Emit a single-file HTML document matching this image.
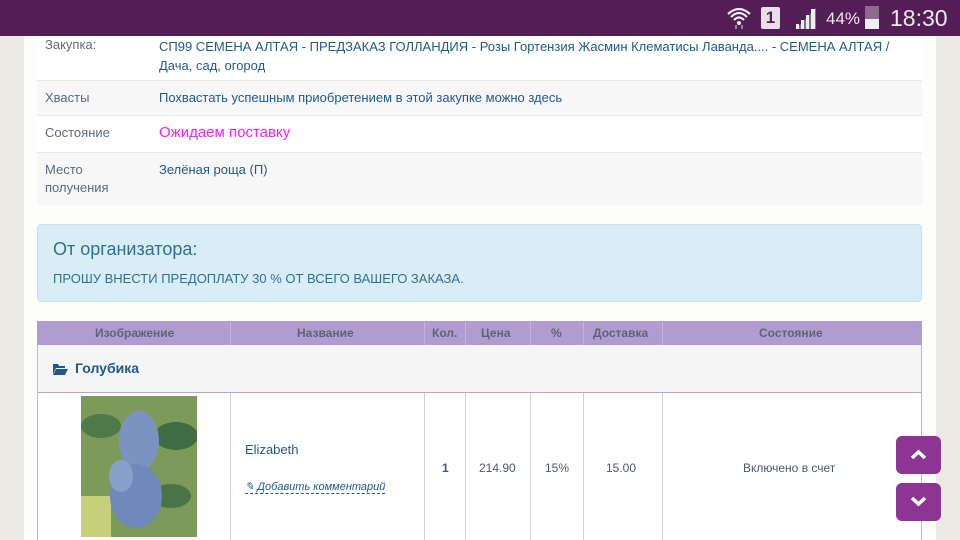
<!DOCTYPE html>
<html><head><meta charset="utf-8"><style>
*{box-sizing:border-box;margin:0;padding:0}
body{width:960px;height:540px;overflow:hidden;position:relative;font-family:"Liberation Sans",sans-serif;background:#ebe9e3}
.sb{position:absolute;left:0;top:0;width:960px;height:36px;background:#531d56;color:#f0e6f0}
.page{position:absolute;left:24px;top:36px;width:912px;height:504px;background:#fdfdfc}
.abs{position:absolute}
.lbl{color:#5a6b7e;font-size:13px}
.val{color:#1f5a8c;font-size:13px}
.row{position:absolute;left:37px;width:885px}
</style></head><body>
<div class="sb">
 <svg class="abs" style="left:726px;top:6px" width="26" height="24" viewBox="0 0 26 24"><path d="M2 8 Q13 -2 24 8 M5 11 Q13 3 21 11 M8 14 Q13 9 18 14" stroke="#eee" stroke-width="2.2" fill="none"/><circle cx="13" cy="17" r="2" fill="#eee"/><path d="M10 19v4M16 19v4" stroke="#aaa" stroke-width="1.5"/></svg>
 <div class="abs" style="left:761px;top:7px;width:19px;height:22px;background:#e8e0e8;border-radius:2px;color:#531d56;font-weight:bold;font-size:17px;text-align:center;line-height:22px">1</div>
 <svg class="abs" style="left:794px;top:6px" width="24" height="24" viewBox="0 0 24 24"><path d="M2 23h20V2z" fill="#777"/><rect x="2" y="18" width="3" height="5" fill="#eee"/><rect x="7" y="14" width="3" height="9" fill="#eee"/><rect x="12" y="9" width="3" height="14" fill="#eee"/><rect x="17" y="3" width="4" height="20" fill="#eee"/></svg>
 <div class="abs" style="left:826px;top:9px;font-size:17px">44%</div>
 <div class="abs" style="left:865px;top:6px;width:14px;height:23px;background:#8e6a8f"></div>
 <div class="abs" style="left:865px;top:19px;width:14px;height:10px;background:#eee"></div>
 <div class="abs" style="left:890px;top:5px;font-size:23px">18:30</div>
</div>
<div class="page"></div>
<div class="row" style="top:36px;height:44px;background:#fff"></div>
<div class="abs lbl" style="left:45px;top:37px">Закупка:</div>
<div class="abs val" style="left:159px;top:37px;line-height:19px;width:760px">СП99 СЕМЕНА АЛТАЯ - ПРЕДЗАКАЗ ГОЛЛАНДИЯ - Розы Гортензия Жасмин Клематисы Лаванда.... - СЕМЕНА АЛТАЯ /<br>Дача, сад, огород</div>
<div class="row" style="top:80px;height:35px;background:#f7f7f7;border-top:1px solid #e8e8e8"></div>
<div class="abs lbl" style="left:45px;top:90px">Хвасты</div>
<div class="abs val" style="left:159px;top:90px">Похвастать успешным приобретением в этой закупке можно здесь</div>
<div class="row" style="top:115px;height:37px;background:#fff;border-top:1px solid #e8e8e8"></div>
<div class="abs lbl" style="left:45px;top:125px">Состояние</div>
<div class="abs" style="left:159px;top:124px;color:#ff1aff;font-size:15px">Ожидаем поставку</div>
<div class="row" style="top:152px;height:53px;background:#f7f7f7;border-top:1px solid #e8e8e8"></div>
<div class="abs lbl" style="left:45px;top:161px;line-height:18px">Место<br>получения</div>
<div class="abs val" style="left:159px;top:162px">Зелёная роща (П)</div>
<div class="row" style="top:224px;height:78px;background:#d9edf7;border:1px solid #bce8f1;border-radius:4px"></div>
<div class="abs" style="left:53px;top:239px;color:#31708f;font-size:18px">От организатора:</div>
<div class="abs" style="left:53px;top:271px;color:#31708f;font-size:13px">ПРОШУ ВНЕСТИ ПРЕДОПЛАТУ 30 % ОТ ВСЕГО ВАШЕГО ЗАКАЗА.</div>
<div class="row" style="top:321px;height:24px;background:#b09cd0"></div>
<div class="abs" style="left:230px;top:321px;width:1px;height:24px;background:#c2b2de"></div>
<div class="abs" style="left:424px;top:321px;width:1px;height:24px;background:#c2b2de"></div>
<div class="abs" style="left:465px;top:321px;width:1px;height:24px;background:#c2b2de"></div>
<div class="abs" style="left:530px;top:321px;width:1px;height:24px;background:#c2b2de"></div>
<div class="abs" style="left:583px;top:321px;width:1px;height:24px;background:#c2b2de"></div>
<div class="abs" style="left:662px;top:321px;width:1px;height:24px;background:#c2b2de"></div>
<div class="abs" style="top:326px;left:37px;width:885px;font-size:12px;font-weight:bold;color:#5a6478">
 <span class="abs" style="left:58px">Изображение</span><span class="abs" style="left:260px">Название</span><span class="abs" style="left:395px">Кол.</span><span class="abs" style="left:444px">Цена</span><span class="abs" style="left:514px">%</span><span class="abs" style="left:556px">Доставка</span><span class="abs" style="left:722px">Состояние</span>
</div>
<div class="row" style="top:345px;height:48px;background:#f5f5f5;border-left:1px solid #c4b2dc;border-right:1px solid #c4b2dc;border-bottom:1px solid #b8a2d8"></div>
<svg class="abs" style="left:53px;top:363px" width="15" height="12" viewBox="0 0 15 12"><path d="M0 1h5l1 2h6v2H3L0 11z M3 6h12l-3 6H0z" fill="#1f5a8c"/></svg>
<div class="abs" style="left:75px;top:360px;color:#1f5a8c;font-weight:bold;font-size:14px">Голубика</div>
<div class="row" style="top:393px;height:147px;background:#fff;border-left:1px solid #c4b2dc;border-right:1px solid #c4b2dc"></div>
<div class="abs" style="left:230px;top:393px;width:1px;height:147px;background:#d6c9e6"></div>
<div class="abs" style="left:424px;top:393px;width:1px;height:147px;background:#d6c9e6"></div>
<div class="abs" style="left:465px;top:393px;width:1px;height:147px;background:#d6c9e6"></div>
<div class="abs" style="left:530px;top:393px;width:1px;height:147px;background:#d6c9e6"></div>
<div class="abs" style="left:583px;top:393px;width:1px;height:147px;background:#d6c9e6"></div>
<div class="abs" style="left:662px;top:393px;width:1px;height:147px;background:#d6c9e6"></div>
<svg class="abs" style="left:81px;top:396px" width="116" height="141" viewBox="0 0 116 141">
 <rect width="116" height="141" fill="#7c9a5a"/>
 <ellipse cx="20" cy="30" rx="20" ry="12" fill="#4d7a46"/><ellipse cx="95" cy="40" rx="22" ry="14" fill="#3f6d43"/><ellipse cx="90" cy="100" rx="20" ry="12" fill="#4a7444"/><rect x="0" y="100" width="30" height="41" fill="#c6cf7a"/>
 <ellipse cx="58" cy="45" rx="20" ry="30" fill="#7c93c2"/><ellipse cx="55" cy="100" rx="26" ry="32" fill="#7088bc"/><ellipse cx="40" cy="80" rx="12" ry="16" fill="#8aa0cc"/>
</svg>
<div class="abs" style="left:245px;top:442px;color:#1f5a8c;font-size:13px">Elizabeth</div>
<div class="abs" style="left:245px;top:480px;color:#1f5a8c;font-size:11px;font-style:italic;border-bottom:1px dashed #1f5a8c">✎ Добавить комментарий</div>
<div class="abs" style="left:442px;top:461px;color:#4a5a70;font-weight:bold;font-size:12px">1</div>
<div class="abs" style="left:479px;top:461px;color:#4a5a70;font-size:12px">214.90</div>
<div class="abs" style="left:545px;top:461px;color:#4a5a70;font-size:12px">15%</div>
<div class="abs" style="left:606px;top:461px;color:#4a5a70;font-size:12px">15.00</div>
<div class="abs" style="left:743px;top:461px;color:#4a5a70;font-size:12px">Включено в счет</div>
<div class="abs" style="left:896px;top:436px;width:45px;height:38px;background:#8c3595;border-radius:6px"></div>
<svg class="abs" style="left:910px;top:448px" width="17" height="12"><path d="M2 10l6.5-6 6.5 6" stroke="#fff" stroke-width="3.5" fill="none"/></svg>
<div class="abs" style="left:896px;top:483px;width:45px;height:38px;background:#8c3595;border-radius:6px"></div>
<svg class="abs" style="left:910px;top:496px" width="17" height="12"><path d="M2 2l6.5 6 6.5-6" stroke="#fff" stroke-width="3.5" fill="none"/></svg>
</body></html>
